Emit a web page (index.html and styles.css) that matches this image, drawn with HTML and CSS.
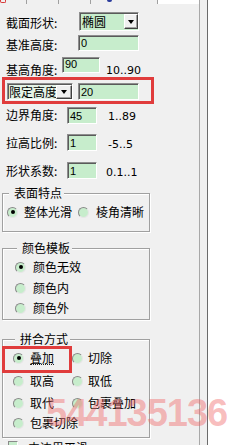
FILE: index.html
```html
<!DOCTYPE html>
<html lang="zh-CN">
<head>
<meta charset="utf-8">
<title>属性面板</title>
<link rel="stylesheet" href="styles.css">
</head>
<body>
<div class="window">
  <div class="panel">
    <div class="tabs">
      <div class="tab t1"><span class="ico-red"></span></div>
      <div class="tab t2"></div>
      <div class="tab t3"></div>
      <div class="tab t4"><span class="ico-blue"></span></div>
      <div class="tab t5"></div>
    </div>
    <div class="form">
      <div class="row r1">
        <span class="lbl">截面形状:</span>
        <div class="combo combo1"><span class="ctext">椭圆</span><span class="btn"><i class="tri"></i></span></div>
      </div>
      <div class="row r2">
        <span class="lbl">基准高度:</span>
        <div class="field f2">0</div>
      </div>
      <div class="row r3">
        <span class="lbl">基高角度:</span>
        <div class="field f3">90</div>
        <span class="range">10..90</span>
      </div>
      <div class="redbox">
        <div class="combo combo2"><span class="ctext">限定高度</span><span class="btn btn2"><i class="tri"></i></span></div>
        <div class="field f4">20</div>
      </div>
      <div class="row r5">
        <span class="lbl">边界角度:</span>
        <div class="field fs">45</div>
        <span class="range">1..89</span>
      </div>
      <div class="row r6">
        <span class="lbl">拉高比例:</span>
        <div class="field fs">1</div>
        <span class="range">-5..5</span>
      </div>
      <div class="row r7">
        <span class="lbl">形状系数:</span>
        <div class="field fs">1</div>
        <span class="range">0.1..1</span>
      </div>

      <fieldset class="group g1">
        <legend class="gtitle">表面特点</legend>
        <div class="opts">
          <label class="opt o-a"><span class="radio on"></span><span class="otext">整体光滑</span></label>
          <label class="opt o-b"><span class="radio"></span><span class="otext">棱角清晰</span></label>
        </div>
      </fieldset>

      <fieldset class="group g2">
        <legend class="gtitle">颜色模板</legend>
        <label class="opt"><span class="radio on"></span><span class="otext">颜色无效</span></label>
        <label class="opt m7"><span class="radio"></span><span class="otext">颜色内</span></label>
        <label class="opt m6"><span class="radio"></span><span class="otext">颜色外</span></label>
      </fieldset>

      <fieldset class="group g3">
        <legend class="gtitle">拼合方式</legend>
        <div class="grid">
          <label class="opt"><span class="radio on"></span><span class="otext focus">叠加</span></label>
          <label class="opt"><span class="radio"></span><span class="otext">切除</span></label>
          <label class="opt m9"><span class="radio"></span><span class="otext">取高</span></label>
          <label class="opt m9"><span class="radio"></span><span class="otext">取低</span></label>
          <label class="opt m8"><span class="radio"></span><span class="otext">取代</span></label>
          <label class="opt m8"><span class="radio"></span><span class="otext">包裹叠加</span></label>
          <label class="opt m6"><span class="radio"></span><span class="otext">包裹切除</span></label>
        </div>
      </fieldset>

      <div class="checkrow">
        <span class="check"></span><span class="ctext2">内边界平滑</span>
      </div>
    </div>
  </div>
  <div class="gutter"></div>
  <div class="side"></div>
  <div class="mark-box"></div>
  <div class="watermark">544135136</div>
</div>
</body>
</html>
```
FILE: styles.css
```css
* { box-sizing: border-box; }

body {
  margin: 0;
  font-family: "Noto Sans CJK SC", "Noto Sans", sans-serif;
  font-size: 12px;
  color: #000;
  background: #fff;
}

.window {
  position: relative;
  display: flex;
  width: 249px;
  height: 445px;
  overflow: hidden;
  background: #fff;
}

.panel {
  flex: none;
  width: 200px;
  background: #f0f0f0;
  border-right: 1px solid #a8a8a8;
}

.gutter {
  flex: none;
  width: 8px;
  background: #f0f0f0;
  border-right: 1px solid #6b6b6b;
}

.side { flex: 1; background: #fff; }

/* tab strip remnants */
.tabs { display: flex; height: 4px; }
.tab { height: 4px; border-right: 1px solid #a0a0a0; flex: none; }
.t1 { width: 27px; }
.t2 { width: 32px; }
.t3 { width: 32px; }
.t4 { width: 67px; }
.t5 { flex: 1; border-right: none; background: #fff; }
.ico-red {
  display: block;
  width: 6px;
  height: 3px;
  border: 1.5px solid #d83a3a;
  border-top: none;
  border-radius: 0 0 2px 2px;
}
.ico-blue {
  display: block;
  margin-left: 16px;
  width: 5px;
  height: 2px;
  background: #2b3c9c;
  border-radius: 0 0 2px 2px;
}

.form { display: flex; flex-direction: column; }

.row { display: flex; align-items: flex-start; flex: none; padding-left: 6px; }
.lbl { flex: none; line-height: 12px; white-space: nowrap; }

.r1 { margin-top: 8px; height: 19px; }
.r1 .lbl { width: 73px; padding-top: 5px; }
.r2 { margin-top: 4px; height: 16px; }
.r2 .lbl { width: 72px; padding-top: 4px; }
.r3 { margin-top: 6px; height: 16px; }
.r3 .lbl { width: 56px; padding-top: 7px; }
.r5 { margin-top: 3px; height: 17px; }
.r6 { margin-top: 10px; height: 17px; }
.r7 { margin-top: 11px; height: 17px; }
.r5 .lbl, .r6 .lbl, .r7 .lbl { width: 61px; }
.r5 .lbl { padding-top: 2px; }
.r6 .lbl { padding-top: 3px; }
.r7 .lbl { padding-top: 3px; }

.range {
  font-family: "DejaVu Sans", sans-serif;
  font-size: 11px;
  line-height: 12px;
  white-space: nowrap;
}
.r3 .range { margin-left: 6px; padding-top: 8px; }
.r5 .range { margin-left: 11px; padding-top: 4px; }
.r6 .range { margin-left: 11px; padding-top: 5px; }
.r7 .range { margin-left: 9px; padding-top: 5px; }

/* edit fields */
.field {
  flex: none;
  display: flex;
  align-items: center;
  padding-left: 2px;
  background: #c7edcc;
  border: 1px solid;
  border-color: #8e8e8e #ffffff #ffffff #8e8e8e;
  box-shadow: inset 1px 1px 0 #5a5a5a;
  font-family: "Liberation Sans", sans-serif;
  font-size: 11px;
  line-height: 12px;
}
.f2 { width: 61px; height: 16px; }
.f3 { width: 38px; height: 16px; align-items: flex-start; padding-top: 0; }
.f4 { width: 61px; height: 17px; margin-left: 5px; }
.fs { width: 30px; height: 17px; }

/* combo boxes */
.combo {
  flex: none;
  display: flex;
  align-items: center;
  background: #c7edcc;
  border: 1px solid;
  border-color: #8e8e8e #ffffff #ffffff #8e8e8e;
  box-shadow: inset 1px 1px 0 #5a5a5a;
  overflow: hidden;
}
.combo1 { width: 60px; height: 19px; }
.combo2 { width: 66px; height: 17px; background: #e4f3e6; }
.ctext { padding-left: 2px; line-height: 12px; white-space: nowrap; overflow: hidden; flex: 1; }
.combo2 .ctext { padding-left: 1px; }

.btn {
  flex: none;
  width: 14px;
  height: 15px;
  margin-right: 0;
  display: flex;
  align-items: center;
  justify-content: center;
  background: #f0f0f0;
  border: 1px solid;
  border-color: #ffffff #404040 #404040 #ffffff;
  box-shadow: inset -1px -1px 0 #a0a0a0;
}
.btn2 { width: 16px; height: 14px; }
.tri {
  display: block;
  width: 0;
  height: 0;
  border-left: 3.5px solid transparent;
  border-right: 3.5px solid transparent;
  border-top: 4px solid #000;
}

/* red highlighted row */
.redbox {
  flex: none;
  display: flex;
  align-items: flex-start;
  margin: 4px 0 0 2px;
  width: 152px;
  height: 27px;
  padding: 3px 0 0 2px;
  border: 3px solid #e03c3c;
}

/* group boxes */
.group {
  flex: none;
  margin: 0 0 0 2px;
  width: 148px;
  min-width: 0;
  border: 1px solid #a0a0a0;
  box-shadow: inset 1px 1px 0 #fff, 1px 1px 0 #fff;
}
.gtitle {
  margin-left: 2px;
  padding: 0 2px 0 5px;
  line-height: 12px;
  background: #f0f0f0;
}
.g1 { margin-top: 8px; padding: 6px 0 12px 4px; }
.g2 { margin-top: 10px; padding: 6px 0 4px 12px; }
.g3 { margin-top: 13px; padding: 6px 0 7px 10px; }

.opts { display: flex; }
.opt { display: flex; align-items: center; height: 14px; }
.o-a { width: 71px; }
.o-a .otext { margin-left: 6px; }
.o-b .otext { margin-left: 7px; }
.g2 .otext { margin-left: 7px; }
.grid { display: grid; grid-template-columns: 59px auto; }
.grid .opt:nth-child(odd) .otext { margin-left: 6px; }
.grid .opt:nth-child(even) .otext { margin-left: 5px; }
.m6 { margin-top: 6px; }
.m7 { margin-top: 7px; }
.m8 { margin-top: 8px; }
.m9 { margin-top: 9px; }

.otext { line-height: 12px; white-space: nowrap; }
.focus { border-bottom: 1px dotted #222; line-height: 12px; }

.radio {
  flex: none;
  position: relative;
  width: 11px;
  height: 11px;
  border-radius: 50%;
  background: #c7edcc;
  border: 1px solid;
  border-color: #8a8a8a #e6e6e6 #e6e6e6 #8a8a8a;
}
.radio.on::after {
  content: "";
  position: absolute;
  left: 2.5px;
  top: 2.5px;
  width: 4px;
  height: 4px;
  border-radius: 50%;
  background: #000;
}

.checkrow {
  display: flex;
  align-items: flex-start;
  margin-top: 3px;
  padding-left: 8px;
  height: 14px;
}
.check {
  flex: none;
  width: 10px;
  height: 10px;
  background: #c7edcc;
  border: 1px solid;
  border-color: #8a8a8a #fff #fff #8a8a8a;
}
.ctext2 { margin-left: 10px; line-height: 12px; margin-top: 1px; }

/* annotation overlays */
.mark-box {
  position: absolute;
  left: 2px;
  top: 346px;
  width: 70px;
  height: 27px;
  border: 3px solid #e03c3c;
  pointer-events: none;
}
.watermark {
  position: absolute;
  left: 46px;
  top: 394px;
  font-family: "Liberation Sans", sans-serif;
  font-weight: bold;
  font-size: 38px;
  line-height: 38px;
  letter-spacing: -1px;
  color: rgba(240, 95, 95, 0.42);
  pointer-events: none;
  white-space: nowrap;
}
```
